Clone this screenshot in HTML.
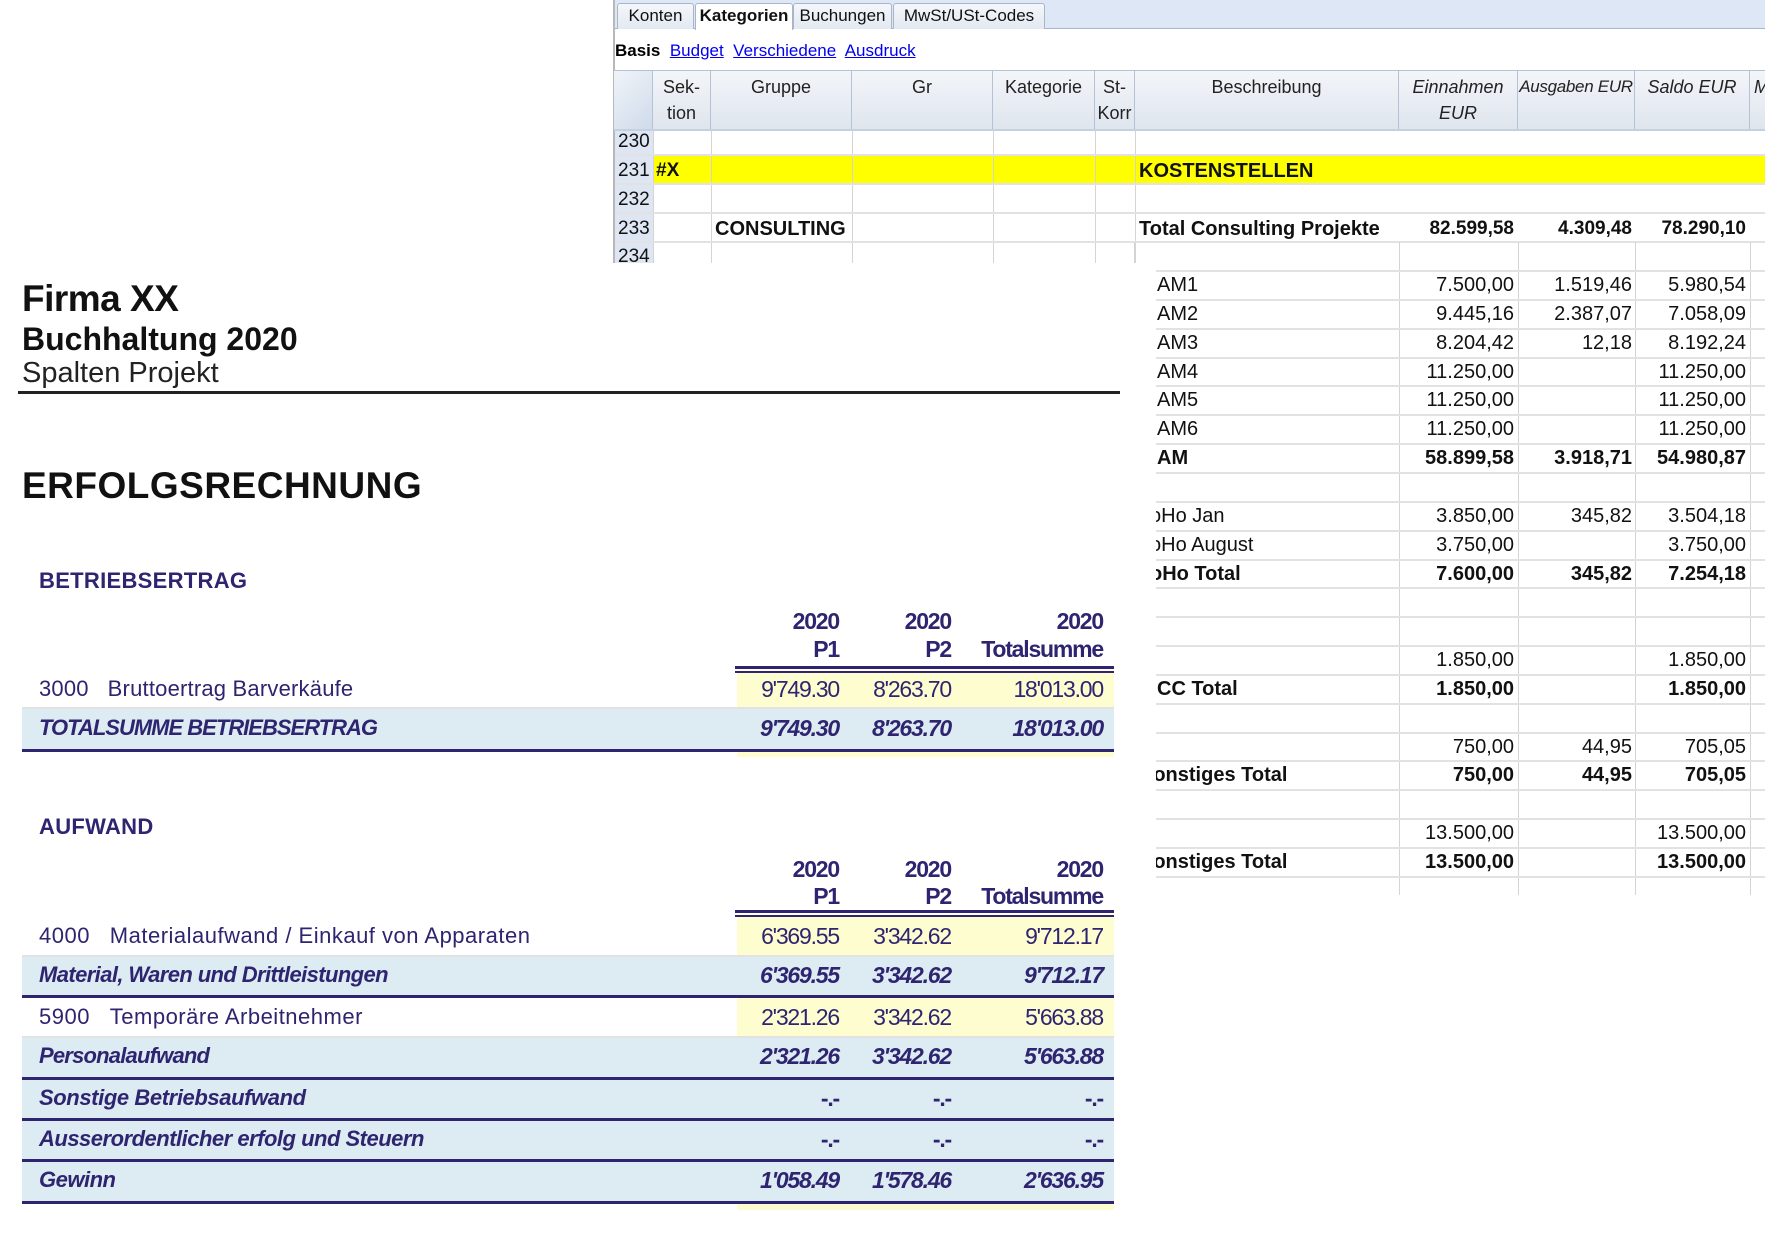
<!DOCTYPE html>
<html><head><meta charset="utf-8">
<style>
*{margin:0;padding:0;box-sizing:border-box}
body{width:1765px;height:1240px;background:#fff;position:relative;overflow:hidden;font-family:"Liberation Sans",Arial,sans-serif}
.a{position:absolute;white-space:nowrap}
.tab{position:absolute;top:3px;height:26px;border:1px solid #aab6c8;border-bottom:none;background:linear-gradient(#f4f7fb,#e3e9f2);font-size:17px;line-height:24px;text-align:center;border-radius:3px 3px 0 0;color:#111}
.vl{position:absolute;width:1px;background:#d4d4d4}
.hl{position:absolute;height:2px;background:#e2e2e2}
.hd{position:absolute;top:71px;height:58px;border-right:1px solid #b4c2d6;background:linear-gradient(#f3f5f9,#dfe5ee);font-size:18px;line-height:26px;text-align:center;color:#222;padding-top:3px;white-space:nowrap;overflow:hidden}
.sc{font-size:19px;line-height:28px;color:#111}
.r{text-align:right}
.b{font-weight:bold}
.rep{color:#2e2470}
.num{position:absolute;text-align:right;font-size:23px;letter-spacing:-1.2px}
.ylw{position:absolute;background:#fdfdd0}
.blu{position:absolute;background:#ddecf3}
.nv{position:absolute;height:3px;background:#2e2470;left:22px;width:1092px}
</style></head><body>

<div class="a" style="left:614px;top:0;width:1151px;height:29px;background:#dde7f5"></div>
<div class="a" style="left:614px;top:28px;width:1151px;height:1px;background:#a8b6ca"></div>
<div class="a" style="left:613px;top:0;width:2px;height:263px;background:#b8b8b8"></div>
<div class="tab" style="left:617px;width:77px">Konten</div>
<div class="tab" style="left:695px;width:98px;background:#fff;height:27px;font-weight:bold">Kategorien</div>
<div class="tab" style="left:793px;width:99px">Buchungen</div>
<div class="tab" style="left:893px;width:152px">MwSt/USt-Codes</div>
<div class="a" style="left:615px;top:40px;font-size:17px;line-height:22px"><b>Basis</b>&nbsp; <span style="color:#0000ee;text-decoration:underline">Budget</span>&nbsp; <span style="color:#0000ee;text-decoration:underline">Verschiedene</span>&nbsp; <span style="color:#0000ee;text-decoration:underline">Ausdruck</span></div>
<div class="a" style="left:614px;top:70px;width:1151px;height:1px;background:#b4c2d6"></div>
<div class="hd" style="left:614px;width:39px;background:linear-gradient(135deg,#f0f4f9,#cfdbea)"></div>
<div class="hd" style="left:653px;width:58px">Sek-<br>tion</div>
<div class="hd" style="left:711px;width:141px">Gruppe</div>
<div class="hd" style="left:852px;width:141px">Gr</div>
<div class="hd" style="left:993px;width:102px">Kategorie</div>
<div class="hd" style="left:1095px;width:40px">St-<br>Korr</div>
<div class="hd" style="left:1135px;width:264px">Beschreibung</div>
<div class="hd" style="left:1399px;width:119px;font-style:italic">Einnahmen<br>EUR</div>
<div class="hd" style="left:1518px;width:117px;font-style:italic;font-size:17px;letter-spacing:-0.3px">Ausgaben EUR</div>
<div class="hd" style="left:1635px;width:115px;font-style:italic">Saldo EUR</div>
<div class="hd" style="left:1750px;width:30px;font-style:italic;text-align:left;padding-left:4px">M</div>
<div class="a" style="left:614px;top:129px;width:1151px;height:2px;background:#c5d0de"></div>
<div class="a" style="left:615px;top:131px;width:38px;height:132px;background:#dde6f2"></div>
<div class="a" style="left:653px;top:155px;width:1112px;height:29px;background:#ffff00"></div>
<div class="vl" style="left:653px;top:131px;height:132px"></div>
<div class="vl" style="left:711px;top:131px;height:132px"></div>
<div class="vl" style="left:852px;top:131px;height:132px"></div>
<div class="vl" style="left:993px;top:131px;height:132px"></div>
<div class="vl" style="left:1095px;top:131px;height:132px"></div>
<div class="vl" style="left:1135px;top:131px;height:132px"></div>
<div class="hl" style="left:615px;top:154px;width:1150px"></div>
<div class="hl" style="left:615px;top:183px;width:1150px"></div>
<div class="hl" style="left:615px;top:212px;width:1150px"></div>
<div class="hl" style="left:615px;top:241px;width:1150px"></div>
<div class="a sc" style="left:618px;top:128px">230</div>
<div class="a sc" style="left:618px;top:157px">231</div>
<div class="a sc" style="left:618px;top:186px">232</div>
<div class="a sc" style="left:618px;top:215px">233</div>
<div class="a sc" style="left:618px;top:243px;height:20px;overflow:hidden">234</div>
<div class="a sc b" style="left:656px;top:157px">#X</div>
<div class="a sc b" style="left:1139px;top:157px;font-size:20px">KOSTENSTELLEN</div>
<div class="a sc b" style="left:715px;top:215px;font-size:20px">CONSULTING</div>
<div class="a sc b" style="left:1139px;top:215px;font-size:20px">Total Consulting Projekte</div>
<div class="a sc b r" style="left:1399px;width:115px;top:215px">82.599,58</div>
<div class="a sc b r" style="left:1518px;width:114px;top:215px">4.309,48</div>
<div class="a sc b r" style="left:1635px;width:111px;top:215px">78.290,10</div>

<div style="position:absolute;left:1156px;top:242px;width:609px;height:660px;overflow:hidden">
<div class="vl" style="left:243px;top:0;height:653px"></div>
<div class="vl" style="left:362px;top:0;height:653px"></div>
<div class="vl" style="left:479px;top:0;height:653px"></div>
<div class="vl" style="left:594px;top:0;height:653px"></div>
<div id="rows"></div>
</div>
<div class="a" style="left:1134px;top:242px;width:1px;height:21px;background:#d4d4d4"></div>

<script>
var d=[["AM1","7.500,00","1.519,46","5.980,54",0],["AM2","9.445,16","2.387,07","7.058,09",0],["AM3","8.204,42","12,18","8.192,24",0],["AM4","11.250,00","","11.250,00",0],["AM5","11.250,00","","11.250,00",0],["AM6","11.250,00","","11.250,00",0],["AM","58.899,58","3.918,71","54.980,87",1],["","","","",0],["oHo Jan","3.850,00","345,82","3.504,18",0],["oHo August","3.750,00","","3.750,00",0],["oHo Total","7.600,00","345,82","7.254,18",1],["","","","",0],["","","","",0],["","1.850,00","","1.850,00",0],["CC Total","1.850,00","","1.850,00",1],["","","","",0],["","750,00","44,95","705,05",0],["Sonstiges Total","750,00","44,95","705,05",1],["","","","",0],["","13.500,00","","13.500,00",0],["Sonstiges Total","13.500,00","","13.500,00",1]];
var h="";
for(var i=0;i<d.length;i++){var t=29+i*28.85,r=d[i],fw=r[4]?"bold":"normal";
var lx=r[0].charAt(0)=="o"?-6:(r[0].indexOf("Sonst")==0?-16:1);
h+='<div class="hl" style="left:0;top:'+(t-1)+'px;width:609px"></div>';
h+='<div class="a sc" style="font-size:20px;font-weight:'+fw+';left:'+lx+'px;top:'+t+'px">'+r[0]+'</div>';
h+='<div class="a sc r" style="font-size:20px;font-weight:'+fw+';left:243px;width:115px;top:'+t+'px">'+r[1]+'</div>';
h+='<div class="a sc r" style="font-size:20px;font-weight:'+fw+';left:362px;width:114px;top:'+t+'px">'+r[2]+'</div>';
h+='<div class="a sc r" style="font-size:20px;font-weight:'+fw+';left:479px;width:111px;top:'+t+'px">'+r[3]+'</div>';}
h+='<div class="hl" style="left:0;top:'+(28+21*28.85)+'px;width:609px"></div>';
document.getElementById("rows").innerHTML=h;
</script>

<div class="a b" style="left:22px;top:279px;font-size:37px;line-height:40px;color:#111;letter-spacing:-0.5px">Firma XX</div>
<div class="a b" style="left:22px;top:321px;font-size:32px;line-height:36px;color:#111">Buchhaltung 2020</div>
<div class="a" style="left:22px;top:356px;font-size:29px;line-height:34px;color:#222">Spalten Projekt</div>
<div class="a" style="left:18px;top:391px;width:1102px;height:3px;background:#222"></div>
<div class="a b" style="left:22px;top:466px;font-size:37px;line-height:40px;letter-spacing:0.5px;color:#111">ERFOLGSRECHNUNG</div>

<div class="a b rep" style="left:39px;top:568px;font-size:22px;line-height:26px;letter-spacing:0.3px">BETRIEBSERTRAG</div>
<div class="num b rep" style="left:740px;width:99px;top:607px;line-height:28px">2020<br>P1</div>
<div class="num b rep" style="left:850px;width:101px;top:607px;line-height:28px">2020<br>P2</div>
<div class="num b rep" style="left:960px;width:143px;top:607px;line-height:28px">2020<br>Totalsumme</div>
<div class="a" style="left:735px;top:666px;width:379px;height:3px;background:#2e2470"></div>
<div class="a" style="left:735px;top:671px;width:379px;height:2px;background:#2e2470"></div>
<div class="ylw" style="left:737px;top:673px;width:377px;height:84px"></div>
<div class="a" style="left:22px;top:707px;width:1092px;height:2px;background:#e2e2e2"></div>
<div class="blu" style="left:22px;top:709px;width:1092px;height:40px"></div>
<div class="nv" style="top:749px"></div>
<div class="a rep" style="left:39px;top:675px;font-size:22px;line-height:28px;letter-spacing:0.2px">3000&nbsp;&nbsp;&nbsp;Bruttoertrag Barverkäufe</div>
<div class="num rep" style="left:740px;width:99px;top:675px;line-height:28px">9'749.30</div>
<div class="num rep" style="left:850px;width:101px;top:675px;line-height:28px">8'263.70</div>
<div class="num rep" style="left:960px;width:143px;top:675px;line-height:28px">18'013.00</div>
<div class="a b rep" style="left:39px;top:714px;font-size:22px;line-height:28px;font-style:italic;letter-spacing:-1px">TOTALSUMME BETRIEBSERTRAG</div>
<div class="num b rep" style="left:740px;width:99px;top:714px;line-height:28px;font-style:italic">9'749.30</div>
<div class="num b rep" style="left:850px;width:101px;top:714px;line-height:28px;font-style:italic">8'263.70</div>
<div class="num b rep" style="left:960px;width:143px;top:714px;line-height:28px;font-style:italic">18'013.00</div>

<div class="a b rep" style="left:39px;top:814px;font-size:22px;line-height:26px;letter-spacing:0.3px">AUFWAND</div>
<div class="num b rep" style="left:740px;width:99px;top:856px;line-height:27px">2020<br>P1</div>
<div class="num b rep" style="left:850px;width:101px;top:856px;line-height:27px">2020<br>P2</div>
<div class="num b rep" style="left:960px;width:143px;top:856px;line-height:27px">2020<br>Totalsumme</div>
<div class="a" style="left:735px;top:910px;width:379px;height:3px;background:#2e2470"></div>
<div class="a" style="left:735px;top:915px;width:379px;height:2px;background:#2e2470"></div>
<div class="ylw" style="left:737px;top:917px;width:377px;height:38px"></div>
<div class="a" style="left:22px;top:955px;width:1092px;height:2px;background:#e2e2e2"></div>
<div class="blu" style="left:22px;top:957px;width:1092px;height:38px"></div>
<div class="nv" style="top:995px"></div>
<div class="ylw" style="left:737px;top:998px;width:377px;height:38px"></div>
<div class="a" style="left:22px;top:1036px;width:1092px;height:2px;background:#e2e2e2"></div>
<div class="blu" style="left:22px;top:1038px;width:1092px;height:39px"></div>
<div class="nv" style="top:1077px"></div>
<div class="blu" style="left:22px;top:1080px;width:1092px;height:38px"></div>
<div class="nv" style="top:1118px"></div>
<div class="blu" style="left:22px;top:1121px;width:1092px;height:38px"></div>
<div class="nv" style="top:1159px"></div>
<div class="blu" style="left:22px;top:1162px;width:1092px;height:39px"></div>
<div class="nv" style="top:1201px"></div>
<div class="ylw" style="left:737px;top:1204px;width:377px;height:6px"></div>

<div class="a rep" style="left:39px;top:922px;font-size:22px;line-height:28px;letter-spacing:0.5px">4000&nbsp;&nbsp;&nbsp;Materialaufwand / Einkauf von Apparaten</div>
<div class="num rep" style="left:740px;width:99px;top:922px;line-height:28px">6'369.55</div>
<div class="num rep" style="left:850px;width:101px;top:922px;line-height:28px">3'342.62</div>
<div class="num rep" style="left:960px;width:143px;top:922px;line-height:28px">9'712.17</div>
<div class="a b rep" style="left:39px;top:961px;font-size:22px;line-height:28px;font-style:italic;letter-spacing:-0.6px">Material, Waren und Drittleistungen</div>
<div class="num b rep" style="left:740px;width:99px;top:961px;line-height:28px;font-style:italic">6'369.55</div>
<div class="num b rep" style="left:850px;width:101px;top:961px;line-height:28px;font-style:italic">3'342.62</div>
<div class="num b rep" style="left:960px;width:143px;top:961px;line-height:28px;font-style:italic">9'712.17</div>
<div class="a rep" style="left:39px;top:1003px;font-size:22px;line-height:28px;letter-spacing:0.5px">5900&nbsp;&nbsp;&nbsp;Temporäre Arbeitnehmer</div>
<div class="num rep" style="left:740px;width:99px;top:1003px;line-height:28px">2'321.26</div>
<div class="num rep" style="left:850px;width:101px;top:1003px;line-height:28px">3'342.62</div>
<div class="num rep" style="left:960px;width:143px;top:1003px;line-height:28px">5'663.88</div>
<div class="a b rep" style="left:39px;top:1042px;font-size:22px;line-height:28px;font-style:italic;letter-spacing:-0.8px">Personalaufwand</div>
<div class="num b rep" style="left:740px;width:99px;top:1042px;line-height:28px;font-style:italic">2'321.26</div>
<div class="num b rep" style="left:850px;width:101px;top:1042px;line-height:28px;font-style:italic">3'342.62</div>
<div class="num b rep" style="left:960px;width:143px;top:1042px;line-height:28px;font-style:italic">5'663.88</div>
<div class="a b rep" style="left:39px;top:1084px;font-size:22px;line-height:28px;font-style:italic;letter-spacing:-0.4px">Sonstige Betriebsaufwand</div>
<div class="num b rep" style="left:740px;width:99px;top:1084px;line-height:28px">-.-</div>
<div class="num b rep" style="left:850px;width:101px;top:1084px;line-height:28px">-.-</div>
<div class="num b rep" style="left:960px;width:143px;top:1084px;line-height:28px">-.-</div>
<div class="a b rep" style="left:39px;top:1125px;font-size:22px;line-height:28px;font-style:italic;letter-spacing:-0.5px">Ausserordentlicher erfolg und Steuern</div>
<div class="num b rep" style="left:740px;width:99px;top:1125px;line-height:28px">-.-</div>
<div class="num b rep" style="left:850px;width:101px;top:1125px;line-height:28px">-.-</div>
<div class="num b rep" style="left:960px;width:143px;top:1125px;line-height:28px">-.-</div>
<div class="a b rep" style="left:39px;top:1166px;font-size:22px;line-height:28px;font-style:italic;letter-spacing:-0.5px">Gewinn</div>
<div class="num b rep" style="left:740px;width:99px;top:1166px;line-height:28px;font-style:italic">1'058.49</div>
<div class="num b rep" style="left:850px;width:101px;top:1166px;line-height:28px;font-style:italic">1'578.46</div>
<div class="num b rep" style="left:960px;width:143px;top:1166px;line-height:28px;font-style:italic">2'636.95</div>
</body></html>
